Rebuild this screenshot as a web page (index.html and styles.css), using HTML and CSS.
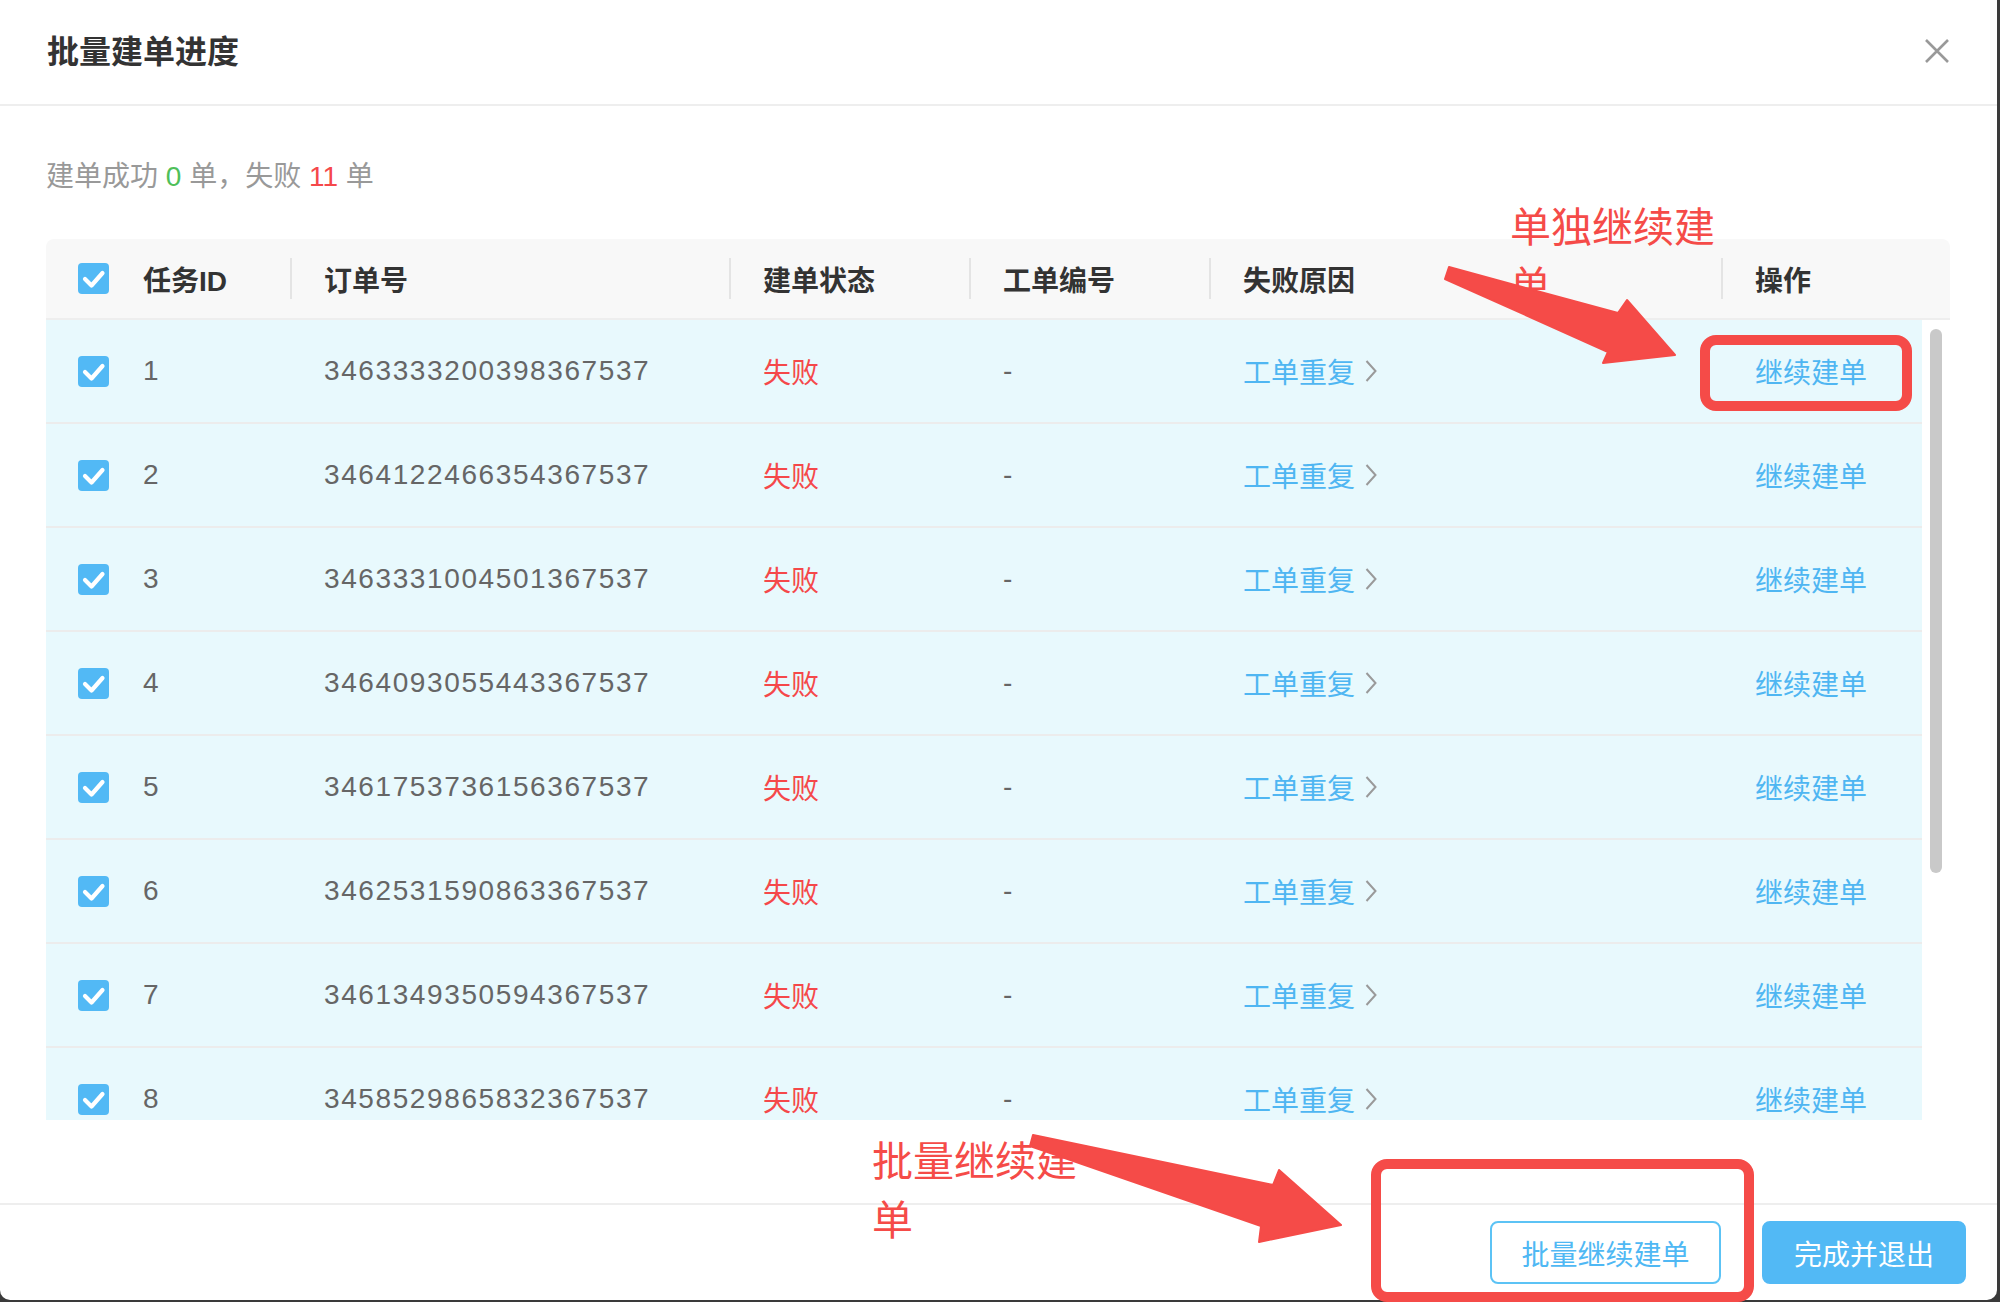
FILE: index.html
```html
<!DOCTYPE html>
<html lang="zh-CN">
<head>
<meta charset="utf-8">
<title>批量建单进度</title>
<link rel="stylesheet" href="styles.css">
</head>
<body>
<div class="modal">
  <div class="modal-header">
    <h1 class="modal-title">批量建单进度</h1>
    <span class="close"><svg width="24" height="24" viewBox="0 0 24 24"><path d="M1 1 L23 23 M23 1 L1 23" stroke="#999" stroke-width="2.6" fill="none"/></svg></span>
  </div>
  <div class="modal-body">
    <p class="summary">建单成功 <span class="ok">0</span> 单，失败 <span class="bad">11</span> 单</p>
    <div class="table">
      <div class="thead">
        <div class="th th-first"><span class="cb"><svg width="31" height="31" viewBox="0 0 31 31"><rect width="31" height="31" rx="4" fill="#52b9f5"/><path d="M7 16 L13.5 22.5 L24.5 10" fill="none" stroke="#fff" stroke-width="4.2" stroke-linecap="round" stroke-linejoin="round"/></svg></span><span>任务ID</span></div>
        <div class="th">订单号</div>
        <div class="th">建单状态</div>
        <div class="th">工单编号</div>
        <div class="th">失败原因</div>
        <div class="th">操作</div>
      </div>
      <div class="tbody-wrap">
        <div class="tbody">
          <div class="tr">
            <div class="td td-first"><span class="cb"><svg width="31" height="31" viewBox="0 0 31 31"><rect width="31" height="31" rx="4" fill="#52b9f5"/><path d="M7 16 L13.5 22.5 L24.5 10" fill="none" stroke="#fff" stroke-width="4.2" stroke-linecap="round" stroke-linejoin="round"/></svg></span><span>1</span></div>
            <div class="td order">3463333200398367537</div>
            <div class="td fail">失败</div>
            <div class="td">-</div>
            <div class="td link">工单重复<svg width="12" height="22" viewBox="0 0 12 22"><path d="M1.5 1 L10.5 11 L1.5 21" fill="none" stroke="#9a9a9a" stroke-width="2"/></svg></div>
            <div class="td action">继续建单</div>
          </div>
          <div class="tr">
            <div class="td td-first"><span class="cb"><svg width="31" height="31" viewBox="0 0 31 31"><rect width="31" height="31" rx="4" fill="#52b9f5"/><path d="M7 16 L13.5 22.5 L24.5 10" fill="none" stroke="#fff" stroke-width="4.2" stroke-linecap="round" stroke-linejoin="round"/></svg></span><span>2</span></div>
            <div class="td order">3464122466354367537</div>
            <div class="td fail">失败</div>
            <div class="td">-</div>
            <div class="td link">工单重复<svg width="12" height="22" viewBox="0 0 12 22"><path d="M1.5 1 L10.5 11 L1.5 21" fill="none" stroke="#9a9a9a" stroke-width="2"/></svg></div>
            <div class="td action">继续建单</div>
          </div>
          <div class="tr">
            <div class="td td-first"><span class="cb"><svg width="31" height="31" viewBox="0 0 31 31"><rect width="31" height="31" rx="4" fill="#52b9f5"/><path d="M7 16 L13.5 22.5 L24.5 10" fill="none" stroke="#fff" stroke-width="4.2" stroke-linecap="round" stroke-linejoin="round"/></svg></span><span>3</span></div>
            <div class="td order">3463331004501367537</div>
            <div class="td fail">失败</div>
            <div class="td">-</div>
            <div class="td link">工单重复<svg width="12" height="22" viewBox="0 0 12 22"><path d="M1.5 1 L10.5 11 L1.5 21" fill="none" stroke="#9a9a9a" stroke-width="2"/></svg></div>
            <div class="td action">继续建单</div>
          </div>
          <div class="tr">
            <div class="td td-first"><span class="cb"><svg width="31" height="31" viewBox="0 0 31 31"><rect width="31" height="31" rx="4" fill="#52b9f5"/><path d="M7 16 L13.5 22.5 L24.5 10" fill="none" stroke="#fff" stroke-width="4.2" stroke-linecap="round" stroke-linejoin="round"/></svg></span><span>4</span></div>
            <div class="td order">3464093055443367537</div>
            <div class="td fail">失败</div>
            <div class="td">-</div>
            <div class="td link">工单重复<svg width="12" height="22" viewBox="0 0 12 22"><path d="M1.5 1 L10.5 11 L1.5 21" fill="none" stroke="#9a9a9a" stroke-width="2"/></svg></div>
            <div class="td action">继续建单</div>
          </div>
          <div class="tr">
            <div class="td td-first"><span class="cb"><svg width="31" height="31" viewBox="0 0 31 31"><rect width="31" height="31" rx="4" fill="#52b9f5"/><path d="M7 16 L13.5 22.5 L24.5 10" fill="none" stroke="#fff" stroke-width="4.2" stroke-linecap="round" stroke-linejoin="round"/></svg></span><span>5</span></div>
            <div class="td order">3461753736156367537</div>
            <div class="td fail">失败</div>
            <div class="td">-</div>
            <div class="td link">工单重复<svg width="12" height="22" viewBox="0 0 12 22"><path d="M1.5 1 L10.5 11 L1.5 21" fill="none" stroke="#9a9a9a" stroke-width="2"/></svg></div>
            <div class="td action">继续建单</div>
          </div>
          <div class="tr">
            <div class="td td-first"><span class="cb"><svg width="31" height="31" viewBox="0 0 31 31"><rect width="31" height="31" rx="4" fill="#52b9f5"/><path d="M7 16 L13.5 22.5 L24.5 10" fill="none" stroke="#fff" stroke-width="4.2" stroke-linecap="round" stroke-linejoin="round"/></svg></span><span>6</span></div>
            <div class="td order">3462531590863367537</div>
            <div class="td fail">失败</div>
            <div class="td">-</div>
            <div class="td link">工单重复<svg width="12" height="22" viewBox="0 0 12 22"><path d="M1.5 1 L10.5 11 L1.5 21" fill="none" stroke="#9a9a9a" stroke-width="2"/></svg></div>
            <div class="td action">继续建单</div>
          </div>
          <div class="tr">
            <div class="td td-first"><span class="cb"><svg width="31" height="31" viewBox="0 0 31 31"><rect width="31" height="31" rx="4" fill="#52b9f5"/><path d="M7 16 L13.5 22.5 L24.5 10" fill="none" stroke="#fff" stroke-width="4.2" stroke-linecap="round" stroke-linejoin="round"/></svg></span><span>7</span></div>
            <div class="td order">3461349350594367537</div>
            <div class="td fail">失败</div>
            <div class="td">-</div>
            <div class="td link">工单重复<svg width="12" height="22" viewBox="0 0 12 22"><path d="M1.5 1 L10.5 11 L1.5 21" fill="none" stroke="#9a9a9a" stroke-width="2"/></svg></div>
            <div class="td action">继续建单</div>
          </div>
          <div class="tr">
            <div class="td td-first"><span class="cb"><svg width="31" height="31" viewBox="0 0 31 31"><rect width="31" height="31" rx="4" fill="#52b9f5"/><path d="M7 16 L13.5 22.5 L24.5 10" fill="none" stroke="#fff" stroke-width="4.2" stroke-linecap="round" stroke-linejoin="round"/></svg></span><span>8</span></div>
            <div class="td order">3458529865832367537</div>
            <div class="td fail">失败</div>
            <div class="td">-</div>
            <div class="td link">工单重复<svg width="12" height="22" viewBox="0 0 12 22"><path d="M1.5 1 L10.5 11 L1.5 21" fill="none" stroke="#9a9a9a" stroke-width="2"/></svg></div>
            <div class="td action">继续建单</div>
          </div>
        </div>
        <div class="scrollbar"><div class="thumb"></div></div>
      </div>
    </div>
  </div>
  <div class="modal-footer">
    <button class="btn btn-outline">批量继续建单</button>
    <button class="btn btn-primary">完成并退出</button>
  </div>
</div>
<div class="note note-top">单独继续建单</div>
<div class="note note-bottom">批量继续建单</div>
<svg class="marks" width="2000" height="1302" viewBox="0 0 2000 1302">
  <polygon points="1449,267 1618,313 1627,300 1675,355 1603,363 1608,352 1445,279" fill="#f54b48" stroke="#f54b48" stroke-width="2" stroke-linejoin="round"/>
  <polygon points="1033,1135 1273,1185 1279,1170 1341,1225 1259,1242 1261,1226 1030,1146" fill="#f54b48" stroke="#f54b48" stroke-width="2" stroke-linejoin="round"/>
  <rect x="1705" y="340" width="202" height="66" rx="11" fill="none" stroke="#f54b48" stroke-width="10"/>
  <rect x="1376" y="1164" width="373" height="133" rx="11" fill="none" stroke="#f54b48" stroke-width="10"/>
</svg>
</body>
</html>
```
FILE: styles.css
```css
* { box-sizing: border-box; }
html, body { margin: 0; padding: 0; }
body {
  width: 2000px;
  height: 1302px;
  background: #3a3a3a;
  font-family: "Liberation Sans", "Noto Sans CJK SC", sans-serif;
  position: relative;
  overflow: hidden;
}
.modal {
  width: 1997px;
  height: 1300px;
  background: #fff;
  border-radius: 0 0 10px 10px;
  display: flex;
  flex-direction: column;
}
.modal-header {
  height: 106px;
  flex: none;
  border-bottom: 2px solid #eeeeee;
  display: flex;
  align-items: center;
  justify-content: space-between;
  padding: 0 48px 0 47px;
}
.modal-title {
  margin: 0;
  font-size: 32px;
  font-weight: 700;
  color: #333;
  line-height: 40px;
}
.close { display: flex; margin-top: -2px; }
.modal-body {
  flex: none;
  padding: 51px 47px 83px 46px;
}
.summary {
  margin: 0 0 42px;
  font-size: 28px;
  line-height: 40px;
  color: #999;
}
.ok { color: #4fbf5a; }
.bad { color: #f5484a; }
.thead {
  display: grid;
  grid-template-columns: 244px 439px 240px 240px 512px 1fr;
  height: 81px;
  align-items: center;
  background: #f8f8f8;
  border-radius: 8px 8px 0 0;
  border-bottom: 2px solid #eeeeee;
}
.th {
  height: 41px;
  display: flex;
  align-items: center;
  border-left: 2px solid #e4e4e4;
  padding-left: 32px;
  font-size: 28px;
  font-weight: 700;
  color: #333;
}
.th-first { border-left: none; gap: 34px; }
.cb { display: flex; }
.tbody-wrap { display: flex; height: 800px; }
.tbody { width: 1876px; overflow: hidden; }
.tr {
  display: grid;
  grid-template-columns: 244px 439px 240px 240px 512px 1fr;
  height: 104px;
  align-items: center;
  background: #e8f9fd;
  border-bottom: 2px solid #ececec;
  font-size: 28px;
  color: #666;
}
.td { padding-left: 34px; display: flex; align-items: center; }
.td-first { padding-left: 32px; gap: 34px; }
.order { letter-spacing: 1.6px; }
.fail { color: #f5484a; }
.link { color: #4fb6f2; gap: 10px; }
.action { color: #4fb6f2; }
.scrollbar { width: 28px; padding: 9px 0 0 8px; }
.thumb { width: 12px; height: 544px; border-radius: 6px; background: #c9c9c9; }
.modal-footer {
  flex: 1;
  border-top: 2px solid #eeeeee;
  display: flex;
  justify-content: flex-end;
  align-items: flex-start;
  gap: 41px;
  padding: 16px 31px 0 0;
}
.btn {
  height: 63px;
  font-size: 28px;
  font-family: inherit;
  border-radius: 8px;
  padding: 0;
}
.btn-outline {
  width: 231px;
  border: 2px solid #5cc3f5;
  color: #4fb8f4;
  background: #fff;
}
.btn-primary {
  width: 204px;
  border: 2px solid #52b9f5;
  background: #52b9f5;
  color: #fff;
}
.note {
  position: absolute;
  width: 220px;
  font-size: 41px;
  line-height: 59px;
  color: #f54b48;
  font-family: "Noto Sans CJK SC", sans-serif;
}
.note-top { left: 1510px; top: 195px; }
.note-bottom { left: 872px; top: 1129px; }
.marks {
  position: absolute;
  left: 0;
  top: 0;
  pointer-events: none;
}
```
